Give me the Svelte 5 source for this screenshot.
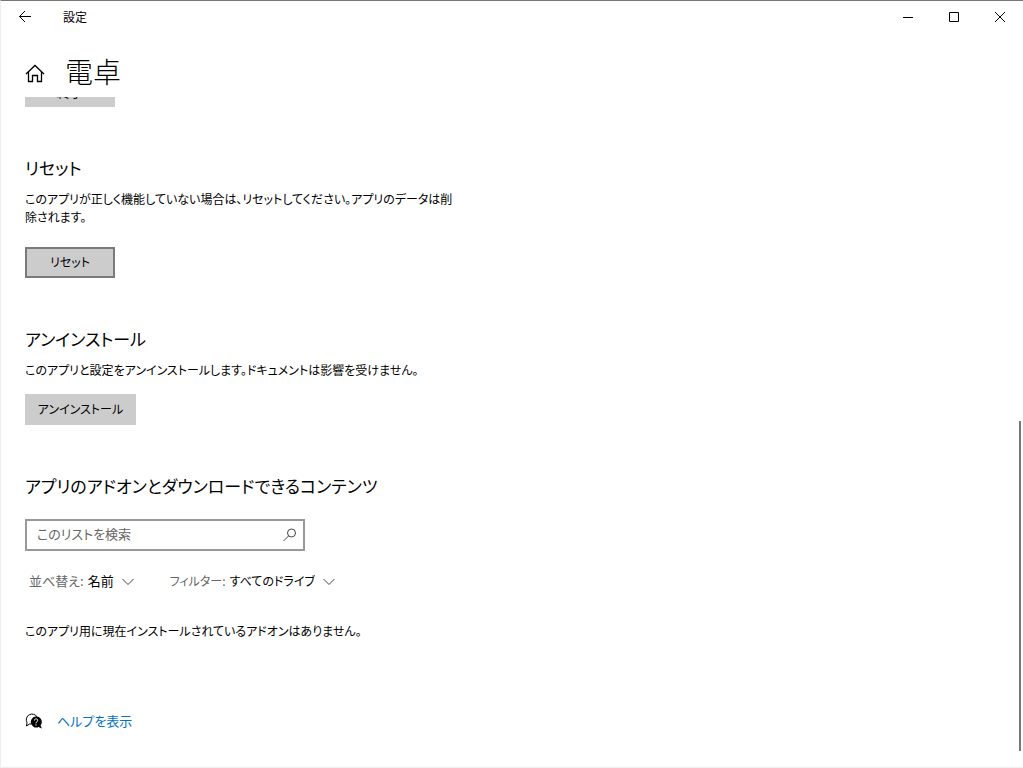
<script>
    let search = $state('');
    let sort = $state('名前');
    let drive = $state('すべてのドライブ');
</script>

<div class="window">
    <div class="titlebar">
        <button class="back" aria-label="戻る">
            <svg width="14" height="14" viewBox="0 0 14 14"><path d="M13 6.5H1.5M7 1L1.5 6.5L7 12" /></svg>
        </button>
        <span class="title">設定</span>
        <div class="controls">
            <button aria-label="最小化">
                <svg width="10" height="10" viewBox="0 0 10 10"><path d="M0 5.5H10" /></svg>
            </button>
            <button aria-label="最大化">
                <svg width="10" height="10" viewBox="0 0 10 10"><path d="M.5 .5H9.5V9.5H.5Z" /></svg>
            </button>
            <button aria-label="閉じる">
                <svg width="10" height="10" viewBox="0 0 10 10"><path d="M0 0L10 10M10 0L0 10" /></svg>
            </button>
        </div>
    </div>

    <header>
        <button class="home" aria-label="ホーム">
            <svg width="20" height="20" viewBox="0 0 20 20"><path d="M1 10L10 1.5L19 10M3.5 8V17.5H7.5V11.5H12.5V17.5H16.5V8" /></svg>
        </button>
        <h1>電卓</h1>
    </header>

    <main>
        <div class="scrolled">
            <button class="btn">終了</button>
        </div>

        <section>
            <h2>リセット</h2>
            <p>このアプリが正しく機能していない場合は、リセットしてください。アプリのデータは削除されます。</p>
            <button class="btn active">リセット</button>
        </section>

        <section class="uninstall">
            <h2>アンインストール</h2>
            <p>このアプリと設定をアンインストールします。ドキュメントは影響を受けません。</p>
            <button class="btn wide">アンインストール</button>
        </section>

        <section class="addons">
            <h2>アプリのアドオンとダウンロードできるコンテンツ</h2>
            <div class="search">
                <input type="text" aria-label="このリストを検索" placeholder="このリストを検索" bind:value={search} />
                <svg width="14" height="14" viewBox="0 0 14 14"><circle cx="8.5" cy="5" r="4" /><path d="M5.5 8L.5 13" /></svg>
            </div>
            <div class="filters">
                <div class="filter sort">
                    <label for="sort">並べ替え:</label>
                    <select id="sort" bind:value={sort}>
                        <option>名前</option>
                    </select>
                    <svg width="12" height="8" viewBox="0 0 12 8"><path d="M.5 1L6 6.5L11.5 1" /></svg>
                </div>
                <div class="filter">
                    <label for="drive">フィルター:</label>
                    <select id="drive" bind:value={drive}>
                        <option>すべてのドライブ</option>
                    </select>
                    <svg width="12" height="8" viewBox="0 0 12 8"><path d="M.5 1L6 6.5L11.5 1" /></svg>
                </div>
            </div>
            <p>このアプリ用に現在インストールされているアドオンはありません。</p>
        </section>

        <div class="help">
            <svg width="18" height="18" viewBox="0 0 18 18">
                <path d="M6 12H4.5L1.5 14L2 10.5A5.5 5.5 0 1 1 12 5" />
                <path class="solid" d="M11 4.5A5.5 5.5 0 1 0 13.5 15L17 16.5L15.5 13.5A5.5 5.5 0 0 0 11 4.5Z" />
                <path class="mark" d="M9.5 8.5A1.6 1.6 0 1 1 12 9.7Q11 10.3 11 11.3M11 12.3V13.5" />
            </svg>
            <a href="#help">ヘルプを表示</a>
        </div>
    </main>

    <div class="scrollbar"></div>
</div>

<style>
    :global(body) {
        background: #fff;
    }

    .window {
        position: relative;
        box-sizing: border-box;
        min-height: 100vh;
        border-top: 1px solid #777;
        border-left: 1px solid #eee;
        border-bottom: 1px solid #eee;
        color: #000;
        font-family: 'Noto Sans CJK JP', sans-serif;
        font-size: 12px;
        font-feature-settings: 'palt';
        line-height: 18px;
    }

    button,
    input,
    select {
        font: inherit;
        font-feature-settings: inherit;
        color: inherit;
        border: none;
        padding: 0;
        background: none;
    }

    svg {
        fill: none;
        stroke: #000;
        flex: none;
    }

    .titlebar {
        display: flex;
        align-items: center;
        height: 32px;
    }

    .back,
    .controls button {
        display: flex;
        align-items: center;
        justify-content: center;
        width: 48px;
        height: 32px;
    }

    .title {
        margin-left: 14px;
    }

    .controls {
        display: flex;
        margin-left: auto;
    }

    .controls button {
        width: 46px;
    }

    header {
        display: flex;
        align-items: center;
        gap: 20px;
        height: 64px;
        padding-left: 24px;
    }

    header .home {
        display: flex;
        margin-top: 18px;
    }

    .home svg {
        stroke-width: 1.3;
    }

    h1 {
        margin: 12px 0 0;
        font-size: 28px;
        font-weight: 300;
        line-height: 36px;
    }

    main {
        padding: 0 24px 32px;
    }

    .scrolled {
        display: flex;
        align-items: flex-end;
        height: 10px;
        overflow: hidden;
    }

    .btn {
        flex: none;
        display: block;
        box-sizing: border-box;
        width: 90px;
        height: 31px;
        padding-bottom: 2px;
        background: #ccc;
    }

    .scrolled .btn {
        padding-bottom: 0;
        font-size: 13px;
    }

    .btn.active {
        border: 2px solid #7a7a7a;
    }

    .btn.wide {
        width: 111px;
    }

    section {
        margin-top: 48px;
    }

    h2 {
        margin: 0;
        font-size: 17px;
        font-weight: 400;
        line-height: 26px;
    }

    p {
        max-width: 438px;
        margin: 0;
    }

    section p {
        margin: 9px 0 21px;
    }

    .uninstall p {
        margin-bottom: 15px;
    }

    .search {
        display: flex;
        align-items: center;
        box-sizing: border-box;
        width: 280px;
        height: 32px;
        margin-top: 20px;
        padding: 0 6px 0 10px;
        border: 2px solid #999;
    }

    .search input {
        flex: 1;
        min-width: 0;
        padding-bottom: 3px;
        outline: none;
        font-size: 13px;
    }

    .search input::placeholder {
        color: #666;
    }

    .search svg,
    .filter svg {
        stroke: #444;
    }

    .filters {
        display: flex;
        gap: 36px;
        margin: 21px 0 0 4px;
    }

    .filter {
        display: flex;
        align-items: center;
        gap: 4px;
    }

    .filter.sort {
        font-size: 13px;
    }

    .filter label {
        color: #666;
    }

    .filter select {
        appearance: none;
        field-sizing: content;
        margin-right: 4px;
    }

    .filter svg {
        margin-top: 2px;
    }

    .addons p {
        margin: 32px 0 0;
    }

    .help {
        display: flex;
        align-items: center;
        gap: 14px;
        margin-top: 72px;
    }

    .help .solid {
        fill: #000;
        stroke: none;
    }

    .help .mark {
        stroke: #fff;
    }

    .help a {
        color: #0072c0;
        font-size: 13px;
        text-decoration: none;
    }

    .scrollbar {
        position: absolute;
        top: 420px;
        right: 2px;
        bottom: 16px;
        width: 2px;
        background: #777;
    }
</style>
